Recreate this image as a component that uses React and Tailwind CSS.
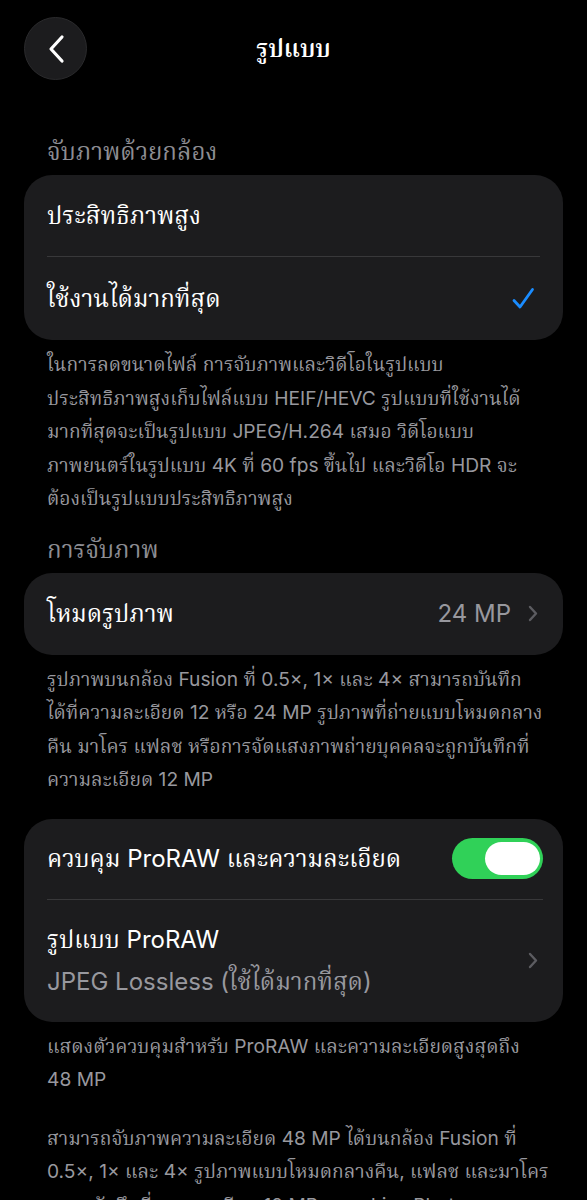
const font = { fontFamily: 'Inter, "Noto Serif Thai", "Noto Sans Thai", sans-serif' };

function Header({ children }) {
  return <p className="mb-[8px] pl-[23px] text-[24px] leading-[30px] text-[#8d8d93]">{children}</p>;
}

function Footer({ lines }) {
  return (
    <div className="mt-[8px] pl-[23px] text-[19.2px] leading-[33.5px] text-[#98989e]">
      {lines.map((l, i) =>
        l === '' ? (
          <div key={i} className="h-[25px]" />
        ) : (
          <p key={i} className="whitespace-nowrap">{l}</p>
        )
      )}
    </div>
  );
}

function Chevron() {
  return (
    <svg width="10" height="17" viewBox="0 0 10 17" fill="none" className="shrink-0">
      <path d="M2 2l6 6.5L2 15" stroke="#5c5c61" strokeWidth="2.4" strokeLinecap="round" strokeLinejoin="round" />
    </svg>
  );
}

export default function App() {
  return (
    <main className="min-h-[1200px] w-full overflow-hidden bg-black px-[24px] text-white" style={font}>
      <div className="grid grid-cols-[63px_1fr_63px] items-center pt-[17px]">
        <button className="flex h-[63px] w-[63px] items-center justify-center rounded-full border border-[#2a2a2c] bg-[#1c1c1e]">
          <svg width="20" height="30" viewBox="0 0 20 30" fill="none">
            <path d="M16 3L5 15l11 12" stroke="white" strokeWidth="3.2" strokeLinecap="round" strokeLinejoin="round" />
          </svg>
        </button>
        <h1 className="text-center text-[24px] font-semibold">รูปแบบ</h1>
        <div />
      </div>

      <div className="mt-[57px]">
        <Header>จับภาพด้วยกล้อง</Header>
        <div className="rounded-[28px] bg-[#1c1c1e] pl-[23px] pr-[23px]">
          <div className="flex h-[82px] items-center border-b border-[#38383a] text-[24px]">ประสิทธิภาพสูง</div>
          <div className="flex h-[83px] items-center justify-between text-[24px]">
            <span>ใช้งานได้มากที่สุด</span>
            <svg width="24" height="24" viewBox="0 0 24 24" fill="none" className="mr-[5px]">
              <path d="M3 13.5l6 6.5L21.5 2.5" stroke="#1a8cff" strokeWidth="2.8" strokeLinecap="round" strokeLinejoin="round" />
            </svg>
          </div>
        </div>
        <Footer
          lines={[
            'ในการลดขนาดไฟล์ การจับภาพและวิดีโอในรูปแบบ',
            'ประสิทธิภาพสูงเก็บไฟล์แบบ HEIF/HEVC รูปแบบที่ใช้งานได้',
            'มากที่สุดจะเป็นรูปแบบ JPEG/H.264 เสมอ วิดีโอแบบ',
            'ภาพยนตร์ในรูปแบบ 4K ที่ 60 fps ขึ้นไป และวิดีโอ HDR จะ',
            'ต้องเป็นรูปแบบประสิทธิภาพสูง',
          ]}
        />
      </div>

      <div className="mt-[19px]">
        <Header>การจับภาพ</Header>
        <div className="flex h-[82px] items-center justify-between rounded-[28px] bg-[#1c1c1e] pl-[23px] pr-[25px] text-[24px]">
          <span>โหมดรูปภาพ</span>
          <div className="flex items-center gap-[17px]">
            <span className="text-[#98989e]">24 MP</span>
            <Chevron />
          </div>
        </div>
        <Footer
          lines={[
            'รูปภาพบนกล้อง Fusion ที่ 0.5×, 1× และ 4× สามารถบันทึก',
            'ได้ที่ความละเอียด 12 หรือ 24 MP รูปภาพที่ถ่ายแบบโหมดกลาง',
            'คืน มาโคร แฟลช หรือการจัดแสงภาพถ่ายบุคคลจะถูกบันทึกที่',
            'ความละเอียด 12 MP',
          ]}
        />
      </div>

      <div className="mt-[22px]">
        <div className="rounded-[28px] bg-[#1c1c1e] pl-[23px] pr-[20px]">
          <div className="flex h-[81px] items-center justify-between border-b border-[#38383a] text-[24px]">
            <span>ควบคุม ProRAW และความละเอียด</span>
            <div className="flex h-[41px] w-[91px] items-center justify-end rounded-full bg-[#30d158] pr-[3px]">
              <div className="h-[33px] w-[55px] rounded-full bg-white" />
            </div>
          </div>
          <div className="flex h-[122px] items-center justify-between pr-[5px]">
            <div className="flex flex-col text-[24px] leading-[42px]">
              <span>รูปแบบ ProRAW</span>
              <span className="text-[#98989e]">JPEG Lossless (ใช้ได้มากที่สุด)</span>
            </div>
            <Chevron />
          </div>
        </div>
        <Footer
          lines={[
            'แสดงตัวควบคุมสำหรับ ProRAW และความละเอียดสูงสุดถึง',
            '48 MP',
            '',
            'สามารถจับภาพความละเอียด 48 MP ได้บนกล้อง Fusion ที่',
            '0.5×, 1× และ 4× รูปภาพแบบโหมดกลางคืน, แฟลช และมาโคร',
            'จะถูกบันทึกที่ความละเอียด 12 MP เสมอ Live Photo สามารถ',
            'บันทึกได้ที่ความละเอียด 12 MP',
          ]}
        />
      </div>
    </main>
  );
}
